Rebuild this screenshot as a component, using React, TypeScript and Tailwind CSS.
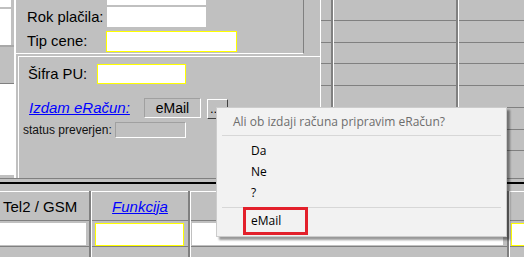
import React from 'react';

const upperRows = [23, 25, 24, 25, 24, 25, 24, 30];

const GridCol = ({ className }: { className: string }) => (
  <div className={`flex flex-col shrink-0 ${className}`}>
    {upperRows.map((h, i) => (
      <div
        key={i}
        style={{ height: h }}
        className={i < upperRows.length - 1 ? 'border-b border-[#808080]' : ''}
      />
    ))}
  </div>
);

const Sep = () => <div className="w-[3px] shrink-0 bg-[#808080] border-r border-white" />;

const App: React.FC = () => {
  return (
    <div className="relative w-[524px] h-[257px] overflow-hidden bg-[#c0c0c0] text-black font-['Liberation_Sans',Arial,sans-serif]">
      {/* upper part */}
      <div className="flex h-[178px] overflow-hidden">
        {/* left list strip */}
        <div className="w-[14px] shrink-0 flex flex-col">
          <div className="h-[7px] w-[11px] bg-white" />
          <div className="h-[2px]" />
          <div className="h-[36px] w-[11px] bg-white" />
          <div className="h-[39px] border-t-2 border-[#a8a8a8] border-b border-b-[#808080]" />
          <div className="h-[91px] bg-white" />
        </div>

        {/* form column */}
        <div className="w-[306px] shrink-0 border-l-2 border-white flex flex-col">
          <div className="w-[288px] h-[54px] border-b border-white border-r border-r-[#808080] flex flex-col text-[14.8px] leading-none">
            <div className="ml-[91px] -mt-[15px] h-[20px] w-[99px] bg-white shrink-0" />
            <div className="mt-[2px] h-[20px] flex items-center shrink-0">
              <span className="w-[91px] pl-[11px]">Rok plačila:</span>
              <div className="w-[99px] h-full bg-white" />
            </div>
            <div className="mt-[4px] h-[21px] flex items-center shrink-0">
              <span className="w-[90px] pl-[11px]">Tip cene:</span>
              <div className="w-[131px] h-full bg-white border border-[#ffff00]" />
            </div>
          </div>

          <div className="ml-[2px] mt-[2px] flex-1 border-l border-t border-white flex flex-col leading-none">
            <div className="mt-[7px] h-[20px] flex items-center text-[14.8px]">
              <span className="w-[78px] pl-[9px]">Šifra PU:</span>
              <div className="w-[89px] h-full bg-white border border-[#ffff00]" />
            </div>
            <div className="mt-[14px] h-[20px] flex items-center">
              <div className="w-[125px] pl-[10px]">
                <span className="text-[15px] italic underline text-[#0000ff]">Izdam eRačun:</span>
              </div>
              <div className="w-[57px] h-full flex items-center justify-center border border-t-[#a0a0a0] border-l-[#a0a0a0] border-r-white border-b-white text-[14px]">
                eMail
              </div>
              <div className="ml-[6px] mt-[2px] w-[21px] h-full flex items-end pl-[2px] pb-[3px] border border-t-white border-l-white border-r-[#404040] border-b-[#404040] text-[13px]">
                ...
              </div>
            </div>
            <div className="mt-[4px] h-[16px] flex items-center">
              <span className="w-[96px] pl-[4px] text-[12px] text-[#111]">status preverjen:</span>
              <div className="w-[71px] h-full border border-t-[#a0a0a0] border-l-[#a0a0a0] border-r-white border-b-white" />
            </div>
          </div>
        </div>

        {/* right grid */}
        <div className="flex-1 flex border-l border-white">
          <GridCol className="w-[10px]" />
          <Sep />
          <GridCol className="w-[122px]" />
          <Sep />
          <GridCol className="flex-1" />
        </div>
      </div>

      <div className="h-px bg-[#808080]" />
      <div className="h-[3px]" />
      <div className="h-[2px] bg-black" />
      <div className="h-[7px]" />

      {/* lower table */}
      <div className="flex h-[70px] text-[15px] leading-none">
        <div className="w-[89px] shrink-0 flex flex-col">
          <div className="h-[30px] border-t border-white border-b border-b-[#808080] flex items-center pl-[3px]">Tel2 / GSM</div>
          <div className="h-[26px] border-b border-[#808080] pt-[2px]">
            <div className="w-[86px] h-[22px] bg-white" />
          </div>
        </div>
        <Sep />
        <div className="w-[96px] shrink-0 flex flex-col">
          <div className="h-[30px] border-t border-white border-b border-b-[#808080] flex items-center justify-center">
            <span className="italic underline text-[#0000ff]">Funkcija</span>
          </div>
          <div className="h-[26px] border-b border-[#808080] pt-[2px] pl-[3px]">
            <div className="w-[89px] h-[23px] bg-white border border-[#ffff00]" />
          </div>
        </div>
        <Sep />
        <div className="w-[316px] shrink-0 flex flex-col">
          <div className="h-[30px] border-t border-white border-b border-b-[#808080]" />
          <div className="h-[26px] border-b border-[#808080] pt-[2px] pl-[1px]">
            <div className="w-[311px] h-[22px] bg-white" />
          </div>
        </div>
        <Sep />
        <div className="flex-1 flex flex-col">
          <div className="h-[30px] border-t border-white border-b border-b-[#808080]" />
          <div className="h-[26px] border-b border-[#808080] pt-[2px] pl-[1px]">
            <div className="w-[40px] h-[23px] bg-white border border-[#ffff00]" />
          </div>
        </div>
      </div>

      {/* context menu */}
      <div className="absolute left-[216px] top-[107px] w-[291px] h-[130px] bg-[#f2f2f2] border border-[#cccccc] shadow-[3px_3px_2px_rgba(0,0,0,0.4)] font-['Open_Sans','Noto_Sans',sans-serif] text-[12px] leading-none flex flex-col">
        <div className="h-[27px] flex items-center pl-[16px] text-[#6d6d6d]">Ali ob izdaji računa pripravim eRačun?</div>
        <div className="mx-[5px] h-px bg-[#d7d7d7]" />
        <div className="mt-[4px] h-[21px] flex items-center pl-[34px]">Da</div>
        <div className="h-[21px] flex items-center pl-[34px]">Ne</div>
        <div className="h-[21px] flex items-center pl-[34px]">?</div>
        <div className="mt-[4px] mx-[5px] h-px bg-[#d7d7d7]" />
        <div className="mt-[2px] h-[22px] flex items-center pl-[34px]">eMail</div>
      </div>
      <div className="absolute left-[243px] top-[207px] w-[65px] h-[28px] border-[3px] border-[#e3202b]" />
    </div>
  );
};

export default App;
